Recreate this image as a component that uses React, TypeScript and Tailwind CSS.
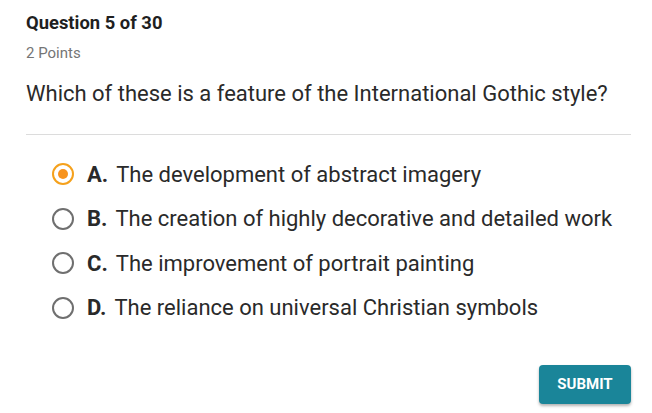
import React from "react";

const options = [
  { letter: "A.", text: "The development of abstract imagery", selected: true },
  { letter: "B.", text: "The creation of highly decorative and detailed work" },
  { letter: "C.", text: "The improvement of portrait painting" },
  { letter: "D.", text: "The reliance on universal Christian symbols" },
];

export default function App() {
  return (
    <div
      className="w-[652px] h-[413px] bg-white text-[#222] overflow-hidden"
      style={{ fontFamily: "Roboto, 'Liberation Sans', sans-serif" }}
    >
      <div className="pl-[26px] pr-[21px] pt-[11px]">
        <div className="text-[18.4px] font-bold leading-[24px] text-[#1f1f1f]">Question 5 of 30</div>
        <div className="text-[15px] leading-[20px] text-[#757575] mt-[8px]">2 Points</div>
        <div className="text-[22px] leading-[30px] text-[#2a2a2a] mt-[16px]">
          Which of these is a feature of the International Gothic style?
        </div>
        <div className="h-px bg-[#dcdcdc] mt-[25px]" />
        <div className="flex flex-col gap-[14.5px] mt-[24px] pl-[26px]">
          {options.map((o) => (
            <div key={o.letter} className="flex items-center h-[30px]">
              {o.selected ? (
                <div className="w-[22px] h-[22px] rounded-full border-2 border-[#f5a11c] flex items-center justify-center">
                  <div className="w-[10px] h-[10px] rounded-full bg-[#f7931e]" />
                </div>
              ) : (
                <div className="w-[22px] h-[22px] rounded-full border-2 border-[#6f6f6f]" />
              )}
              <span className="ml-[13px] text-[22px] font-bold text-[#2a2a2a]">{o.letter}</span>
              <span className="ml-[8px] text-[22px] text-[#2a2a2a]">{o.text}</span>
            </div>
          ))}
        </div>
        <div className="flex justify-end mt-[42px]">
          <button className="w-[92px] h-[39px] rounded-[4px] bg-[#1a8599] text-white text-[15px] font-bold shadow-[0_2px_3px_rgba(0,0,0,0.3)]">
            SUBMIT
          </button>
        </div>
      </div>
    </div>
  );
}
